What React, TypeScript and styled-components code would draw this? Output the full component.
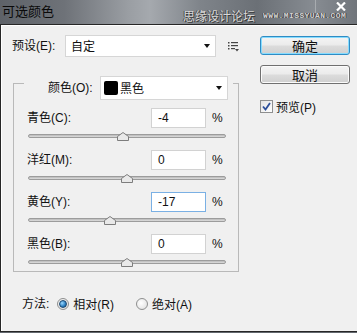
import React from "react";
import styled, { createGlobalStyle } from "styled-components";

const GlobalStyle = createGlobalStyle`
  html, body {
    margin: 0;
    padding: 0;
    background: #62676d;
  }
  body {
    font-family: "Liberation Sans", "Noto Sans CJK SC", sans-serif;
    font-size: 12px;
    color: #111;
  }
`;

const Frame = styled.div`
  width: 357px;
  height: 333px;
  display: flex;
  flex-direction: column;
  overflow: hidden;
`;

const TitleBar = styled.div`
  position: relative;
  flex: none;
  height: 24px;
  display: flex;
  overflow: hidden;
  background: linear-gradient(
    90deg,
    #5e6268 0%,
    #6e7278 18%,
    #9a9ea3 36%,
    #a5a9ae 42%,
    #7f848a 56%,
    #6b7076 72%,
    #878c92 88%,
    #70757b 100%
  );
`;

const Title = styled.div`
  padding: 3px 0 0 2px;
  font-family: "Noto Sans CJK SC", sans-serif;
  font-size: 13px;
  line-height: 16px;
  color: #0a0a0a;
`;

const Watermark = styled.div`
  position: absolute;
  left: 183px;
  bottom: 1px;
  width: 200px;
  display: flex;
  align-items: center;
  gap: 8px;
  white-space: nowrap;
`;

const WatermarkCn = styled.span`
  flex: none;
  font-family: "Noto Sans CJK SC", sans-serif;
  font-size: 12px;
  line-height: 14px;
  color: #d8d8d8;
  text-shadow: 1px 1px 0 #3a3a3a, -1px 0 0 #4a4a4a;
`;

const WatermarkEn = styled.span`
  flex: none;
  display: inline-block;
  font-family: "Liberation Mono", monospace;
  font-weight: bold;
  font-size: 10px;
  line-height: 10px;
  letter-spacing: 0.5px;
  color: #d2d2d2;
  text-shadow: 1px 1px 0 #333, -1px 0 0 #444;
  transform: scale(0.8);
  transform-origin: left center;
`;

const CloseButton = styled.div`
  position: absolute;
  top: 0;
  right: 0;
  width: 42px;
  height: 13px;
  padding-left: 8px;
  box-sizing: border-box;
  display: flex;
  align-items: center;
  justify-content: center;
  border-left: 1px solid rgba(255, 255, 255, 0.28);
`;

const Body = styled.div`
  flex: 1;
  margin-bottom: 1px;
  display: flex;
  gap: 20px;
  padding: 10px 0 0 11px;
  background: #f0f0f0;
  border: 1px solid #262626;
  border-right: none;
  box-shadow: inset 1px 1px 0 #ffffff;
`;

const LeftColumn = styled.div`
  width: 228px;
  display: flex;
  flex-direction: column;
`;

const RightColumn = styled.div`
  width: 90px;
  padding-top: 1px;
  display: flex;
  flex-direction: column;
`;

const PresetRow = styled.div`
  display: flex;
  align-items: center;
  height: 22px;
`;

const Label = styled.span<{ $width?: number }>`
  width: ${(p) => (p.$width ? `${p.$width}px` : "auto")};
  flex: none;
  line-height: 16px;
  white-space: nowrap;
`;

const Select = styled.div<{ $width: number; $height: number }>`
  width: ${(p) => p.$width}px;
  height: ${(p) => p.$height}px;
  box-sizing: border-box;
  display: flex;
  align-items: center;
  padding: 0 5px 0 3px;
  background: #ffffff;
  border: 1px solid #d6d6d6;
  font-size: 12px;
`;

const SelectText = styled.span`
  flex: 1;
  font-family: "Noto Sans CJK SC", sans-serif;
  line-height: 16px;
  padding-left: 2px;
`;

const Swatch = styled.span`
  width: 14px;
  height: 14px;
  border-radius: 2px;
  background: #000;
  flex: none;
`;

const Arrow = styled.span`
  width: 0;
  height: 0;
  border-left: 3.5px solid transparent;
  border-right: 3.5px solid transparent;
  border-top: 4px solid #111;
`;

const MenuIcon = styled.svg`
  margin-left: 12px;
  flex: none;
`;

const Group = styled.div`
  margin: 26px 0 0 1px;
  width: 226px;
  box-sizing: border-box;
  border: 1px solid #b9b9b9;
  display: flex;
  flex-direction: column;
`;

const GroupHeader = styled.div`
  align-self: flex-start;
  margin: -8px 0 0 10px;
  padding: 0 5px 0 24px;
  background: #f0f0f0;
  display: flex;
  align-items: center;
`;

const GroupContent = styled.div`
  padding: 8px 10px 3px 13px;
  display: flex;
  flex-direction: column;
  gap: 8px;
`;

const ChannelRow = styled.div`
  display: flex;
  flex-direction: column;
`;

const ChannelTop = styled.div`
  height: 20px;
  display: flex;
  align-items: center;
`;

const ValueBox = styled.div<{ $focused?: boolean }>`
  margin-left: auto;
  width: 55px;
  height: 20px;
  box-sizing: border-box;
  display: flex;
  align-items: center;
  padding-left: 6px;
  background: #fff;
  border: 1px solid ${(p) => (p.$focused ? "#7ab0e4" : "#d2d2d2")};
  font-size: 12px;
`;

const Percent = styled.span`
  width: 16px;
  margin-left: 6px;
  line-height: 16px;
`;

const SliderZone = styled.div`
  height: 14px;
  padding-top: 6px;
  box-sizing: border-box;
`;

const Track = styled.div`
  position: relative;
  margin-left: 1px;
  width: 198px;
  height: 4px;
  box-sizing: border-box;
  border: 1px solid #9c9c9c;
  border-radius: 2px;
  background: linear-gradient(#b9b9b9, #dedede);
`;

const Thumb = styled.svg`
  position: absolute;
  top: -3px;
  margin-left: -6px;
`;

const MethodRow = styled.div`
  margin-top: 23px;
  margin-left: 10px;
  display: flex;
  align-items: center;
`;

const RadioItem = styled.label<{ $gap: number }>`
  display: flex;
  align-items: center;
  gap: 4px;
  margin-left: ${(p) => p.$gap}px;
`;

const RadioDot = styled.span<{ $checked?: boolean }>`
  width: 12px;
  height: 12px;
  box-sizing: border-box;
  border-radius: 50%;
  border: 1px solid #8e8f8f;
  background: radial-gradient(circle at 40% 40%, #ffffff, #dcdcdc);
  display: flex;
  align-items: center;
  justify-content: center;
  &::after {
    content: "";
    display: ${(p) => (p.$checked ? "block" : "none")};
    width: 6px;
    height: 6px;
    border-radius: 50%;
    border: 1px solid #1b466e;
    background: radial-gradient(circle at 35% 35%, #9ad8ff, #2b7fc2 60%, #15507f);
  }
`;

const DialogButton = styled.div<{ $default?: boolean }>`
  height: 19px;
  box-sizing: border-box;
  display: flex;
  align-items: center;
  justify-content: center;
  border-radius: 3px;
  border: 1px solid ${(p) => (p.$default ? "#2f8cc4" : "#707070")};
  box-shadow: inset 0 0 0 1px ${(p) => (p.$default ? "#86dcff" : "#fbfbfb")};
  background: linear-gradient(#f4f4f4, #ebebeb 48%, #dcdcdc 52%, #d0d0d0);
  font-family: "Noto Sans CJK SC", sans-serif;
  font-size: 13px;
  color: #111;
  & + & {
    margin-top: 10px;
  }
`;

const CheckRow = styled.div`
  margin-top: 14px;
  display: flex;
  align-items: center;
  gap: 3px;
`;

const CheckBox = styled.span`
  width: 13px;
  height: 13px;
  box-sizing: border-box;
  border: 1px solid #8e8f8f;
  background: linear-gradient(135deg, #e4e4e4, #ffffff);
  display: flex;
  align-items: center;
  justify-content: center;
`;

const channels = [
  { label: "青色(C):", value: -4 },
  { label: "洋红(M):", value: 0 },
  { label: "黄色(Y):", value: -17, focused: true },
  { label: "黑色(B):", value: 0 },
];

const Slider = ({ value }: { value: number }) => (
  <SliderZone>
    <Track>
      <Thumb
        width="12"
        height="9"
        viewBox="0 0 12 9"
        style={{ left: `${((value + 100) / 200) * 196}px` }}
      >
        <polygon
          points="0.5,8.5 0.5,4.5 6,0.5 11.5,4.5 11.5,8.5"
          fill="#e9e9e9"
          stroke="#7d7d7d"
        />
      </Thumb>
    </Track>
  </SliderZone>
);

export default function App() {
  return (
    <Frame>
      <GlobalStyle />
      <TitleBar>
        <Title>可选颜色</Title>
        <Watermark>
          <WatermarkCn>思缘设计论坛</WatermarkCn>
          <WatermarkEn>WWW.MISSYUAN.COM</WatermarkEn>
        </Watermark>
        <CloseButton>
          <svg width="10" height="9" viewBox="0 0 10 9">
            <path d="M1 0.5 L9 8.5 M9 0.5 L1 8.5" stroke="#ffffff" strokeWidth="2.2" />
          </svg>
        </CloseButton>
      </TitleBar>
      <Body>
        <LeftColumn>
          <PresetRow>
            <Label $width={53}>预设(E):</Label>
            <Select $width={151} $height={22}>
              <SelectText>自定</SelectText>
              <Arrow />
            </Select>
            <MenuIcon width="11" height="11" viewBox="0 0 11 11">
              <g fill="#444">
                <rect x="0" y="1" width="1.5" height="1.5" />
                <rect x="3" y="1" width="7" height="1.2" />
                <rect x="0" y="4" width="1.5" height="1.5" />
                <rect x="3" y="4" width="7" height="1.2" />
                <rect x="0" y="7" width="1.5" height="1.5" />
                <rect x="3" y="7" width="4" height="1.2" />
                <polygon points="7,8 11,8 9,10.5" />
              </g>
            </MenuIcon>
          </PresetRow>
          <Group>
            <GroupHeader>
              <Label $width={52}>颜色(O):</Label>
              <Select $width={128} $height={24}>
                <Swatch />
                <SelectText>黑色</SelectText>
                <Arrow />
              </Select>
            </GroupHeader>
            <GroupContent>
              {channels.map((c) => (
                <ChannelRow key={c.label}>
                  <ChannelTop>
                    <Label>{c.label}</Label>
                    <ValueBox $focused={c.focused}>{c.value}</ValueBox>
                    <Percent>%</Percent>
                  </ChannelTop>
                  <Slider value={c.value} />
                </ChannelRow>
              ))}
            </GroupContent>
          </Group>
          <MethodRow>
            <Label>方法:</Label>
            <RadioItem $gap={8}>
              <RadioDot $checked />
              <span>相对(R)</span>
            </RadioItem>
            <RadioItem $gap={22}>
              <RadioDot />
              <span>绝对(A)</span>
            </RadioItem>
          </MethodRow>
        </LeftColumn>
        <RightColumn>
          <DialogButton $default>确定</DialogButton>
          <DialogButton>取消</DialogButton>
          <CheckRow>
            <CheckBox>
              <svg width="9" height="9" viewBox="0 0 9 9">
                <path d="M1 4.5 L3.5 7.5 L8 1" stroke="#2d4f9a" strokeWidth="1.8" fill="none" />
              </svg>
            </CheckBox>
            <span>预览(P)</span>
          </CheckRow>
        </RightColumn>
      </Body>
    </Frame>
  );
}
